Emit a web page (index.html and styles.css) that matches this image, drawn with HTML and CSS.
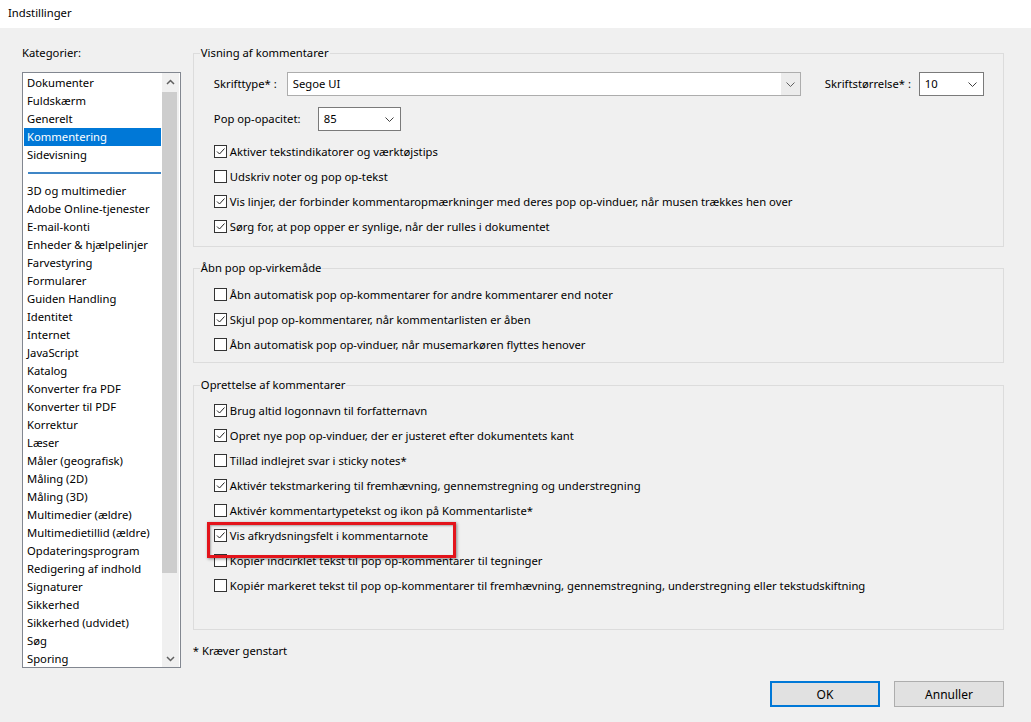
FILE: index.html
```html
<!DOCTYPE html>
<html lang="da">
  <head>
    <meta charset="UTF-8" />
    <title>Indstillinger</title>
    <link rel="stylesheet" href="styles.css">
  </head>
  <body>
    <div class="titlebar">Indstillinger</div>

    <div class="dialog">
      <div class="main-row">
        <div class="left">
          <div class="cat-label">Kategorier:</div>
          <div class="listbox">
            <div class="items">
              <div class="item">Dokumenter</div>
              <div class="item">Fuldskærm</div>
              <div class="item">Generelt</div>
              <div class="item selected">Kommentering</div>
              <div class="item">Sidevisning</div>
              <div class="sep"><span></span></div>
              <div class="item">3D og multimedier</div>
              <div class="item">Adobe Online-tjenester</div>
              <div class="item">E-mail-konti</div>
              <div class="item">Enheder &amp; hjælpelinjer</div>
              <div class="item">Farvestyring</div>
              <div class="item">Formularer</div>
              <div class="item">Guiden Handling</div>
              <div class="item">Identitet</div>
              <div class="item">Internet</div>
              <div class="item">JavaScript</div>
              <div class="item">Katalog</div>
              <div class="item">Konverter fra PDF</div>
              <div class="item">Konverter til PDF</div>
              <div class="item">Korrektur</div>
              <div class="item">Læser</div>
              <div class="item">Måler (geografisk)</div>
              <div class="item">Måling (2D)</div>
              <div class="item">Måling (3D)</div>
              <div class="item">Multimedier (ældre)</div>
              <div class="item">Multimedietillid (ældre)</div>
              <div class="item">Opdateringsprogram</div>
              <div class="item">Redigering af indhold</div>
              <div class="item">Signaturer</div>
              <div class="item">Sikkerhed</div>
              <div class="item">Sikkerhed (udvidet)</div>
              <div class="item">Søg</div>
              <div class="item">Sporing</div>
            </div>
            <div class="scrollbar">
              <div class="sb-arrow">
                <svg width="9" height="6" viewBox="0 0 9 6"><path d="M1 5 L4.5 1.5 L8 5" fill="none" stroke="#606060" stroke-width="1.5"/></svg>
              </div>
              <div class="sb-thumb"></div>
              <div class="sb-track"></div>
              <div class="sb-arrow">
                <svg width="9" height="6" viewBox="0 0 9 6"><path d="M1 1 L4.5 4.5 L8 1" fill="none" stroke="#606060" stroke-width="1.5"/></svg>
              </div>
            </div>
          </div>
        </div>

        <div class="right">
          <fieldset class="group g1">
            <legend>Visning af kommentarer</legend>
            <div class="field-row">
              <span class="label l-font">Skrifttype* :</span>
              <div class="combo combo-font">
                <span class="combo-text">Segoe UI</span>
                <span class="combo-btn">
                  <svg width="9" height="5" viewBox="0 0 9 5"><path d="M0.5 0.5 L4.5 4.5 L8.5 0.5" fill="none" stroke="#606060"/></svg>
                </span>
              </div>
              <span class="label l-size">Skriftstørrelse* :</span>
              <div class="select select-size">
                <span>10</span>
                <svg width="9" height="5" viewBox="0 0 9 5"><path d="M0.5 0.5 L4.5 4.5 L8.5 0.5" fill="none" stroke="#404040"/></svg>
              </div>
            </div>
            <div class="field-row row-opacity">
              <span class="label l-opacity">Pop op-opacitet:</span>
              <div class="select select-opacity">
                <span>85</span>
                <svg width="9" height="5" viewBox="0 0 9 5"><path d="M0.5 0.5 L4.5 4.5 L8.5 0.5" fill="none" stroke="#404040"/></svg>
              </div>
            </div>
            <div class="checks">
              <div class="cb-row"><span class="cb on"><svg width="11" height="11" viewBox="0 0 11 11"><path d="M2 5.5 L4.5 8 L9.5 2.5" fill="none" stroke="#222"/></svg></span>Aktiver tekstindikatorer og værktøjstips</div>
              <div class="cb-row"><span class="cb"></span>Udskriv noter og pop op-tekst</div>
              <div class="cb-row"><span class="cb on"><svg width="11" height="11" viewBox="0 0 11 11"><path d="M2 5.5 L4.5 8 L9.5 2.5" fill="none" stroke="#222"/></svg></span>Vis linjer, der forbinder kommentaropmærkninger med deres pop op-vinduer, når musen trækkes hen over</div>
              <div class="cb-row"><span class="cb on"><svg width="11" height="11" viewBox="0 0 11 11"><path d="M2 5.5 L4.5 8 L9.5 2.5" fill="none" stroke="#222"/></svg></span>Sørg for, at pop opper er synlige, når der rulles i dokumentet</div>
            </div>
          </fieldset>

          <fieldset class="group g2">
            <legend>Åbn pop op-virkemåde</legend>
            <div class="checks">
              <div class="cb-row"><span class="cb"></span>Åbn automatisk pop op-kommentarer for andre kommentarer end noter</div>
              <div class="cb-row"><span class="cb on"><svg width="11" height="11" viewBox="0 0 11 11"><path d="M2 5.5 L4.5 8 L9.5 2.5" fill="none" stroke="#222"/></svg></span>Skjul pop op-kommentarer, når kommentarlisten er åben</div>
              <div class="cb-row"><span class="cb"></span>Åbn automatisk pop op-vinduer, når musemarkøren flyttes henover</div>
            </div>
          </fieldset>

          <fieldset class="group g3">
            <legend>Oprettelse af kommentarer</legend>
            <div class="checks">
              <div class="cb-row"><span class="cb on"><svg width="11" height="11" viewBox="0 0 11 11"><path d="M2 5.5 L4.5 8 L9.5 2.5" fill="none" stroke="#222"/></svg></span>Brug altid logonnavn til forfatternavn</div>
              <div class="cb-row"><span class="cb on"><svg width="11" height="11" viewBox="0 0 11 11"><path d="M2 5.5 L4.5 8 L9.5 2.5" fill="none" stroke="#222"/></svg></span>Opret nye pop op-vinduer, der er justeret efter dokumentets kant</div>
              <div class="cb-row"><span class="cb"></span>Tillad indlejret svar i sticky notes*</div>
              <div class="cb-row"><span class="cb on"><svg width="11" height="11" viewBox="0 0 11 11"><path d="M2 5.5 L4.5 8 L9.5 2.5" fill="none" stroke="#222"/></svg></span>Aktivér tekstmarkering til fremhævning, gennemstregning og understregning</div>
              <div class="cb-row"><span class="cb"></span>Aktivér kommentartypetekst og ikon på Kommentarliste*</div>
              <div class="cb-row highlight"><span class="cb on"><svg width="11" height="11" viewBox="0 0 11 11"><path d="M2 5.5 L4.5 8 L9.5 2.5" fill="none" stroke="#222"/></svg></span>Vis afkrydsningsfelt i kommentarnote</div>
              <div class="cb-row"><span class="cb"></span>Kopier indcirklet tekst til pop op-kommentarer til tegninger</div>
              <div class="cb-row"><span class="cb"></span>Kopiér markeret tekst til pop op-kommentarer til fremhævning, gennemstregning, understregning eller tekstudskiftning</div>
            </div>
          </fieldset>

          <div class="footnote">* Kræver genstart</div>
        </div>
      </div>

      <div class="buttons">
        <button class="btn btn-default">OK</button>
        <button class="btn">Annuller</button>
      </div>
    </div>
  </body>
</html>
```

FILE: styles.css
```css
* {
  box-sizing: border-box;
  margin: 0;
  padding: 0;
}
body {
  font-family: "Noto Sans", "Liberation Sans", sans-serif;
  font-size: 11.25px;
  line-height: 18px;
  color: #000;
  background: #f0f0f0;
  width: 1031px;
  height: 722px;
  overflow: hidden;
}
.titlebar {
  height: 28px;
  line-height: 26px;
  padding-left: 8px;
  background: #fff;
}
.dialog {
  padding: 16px 27px 0 22px;
}
.main-row {
  display: flex;
}
.left {
  width: 159px;
}
.cat-label {
  height: 18px;
  margin-bottom: 10px;
}
.listbox {
  display: flex;
  height: 596px;
  background: #fff;
  border: 1px solid #828790;
  overflow: hidden;
}
.items {
  width: 139px;
  padding: 1px;
}
.item {
  height: 18px;
  padding-left: 3px;
  white-space: nowrap;
}
.item.selected {
  background: #0078d7;
  color: #fff;
}
.sep {
  height: 18px;
  padding: 0 0 0 4px;
  display: flex;
  align-items: center;
}
.sep span {
  display: block;
  width: 133px;
  height: 2px;
  background: #3f86c6;
}
.scrollbar {
  width: 17px;
  display: flex;
  flex-direction: column;
  background: #f0f0f0;
}
.sb-arrow {
  height: 17px;
  display: flex;
  align-items: center;
  justify-content: center;
}
.sb-thumb {
  height: 481px;
  margin: 2px 2px 0 0;
  background: #cdcdcd;
}
.sb-track {
  flex: 1;
}
.right {
  width: 812px;
  margin-left: 12px;
}
.group {
  border: 1px solid #dcdcdc;
  padding: 0 0 0 20px;
  min-width: 0;
}
.group legend {
  margin-left: -14px;
  padding: 0 1px;
  line-height: 18px;
}
.g1 {
  padding-top: 10px;
  padding-bottom: 7px;
}
.g2 {
  margin-top: 12px;
  padding-top: 5px;
  padding-bottom: 5px;
}
.g3 {
  margin-top: 13px;
  padding-top: 4px;
  padding-bottom: 31px;
}
.field-row {
  display: flex;
  align-items: center;
  height: 24px;
}
.row-opacity {
  margin-top: 11px;
}
.label {
  white-space: nowrap;
}
.l-font {
  width: 73px;
}
.l-size {
  width: 94px;
  margin-left: 24px;
}
.l-opacity {
  width: 104px;
}
.combo {
  display: flex;
  width: 514px;
  height: 24px;
  border: 1px solid #adadad;
  background: #fff;
}
.combo-text {
  flex: 1;
  padding-left: 5px;
  line-height: 22px;
}
.combo-btn {
  width: 19px;
  background: #ececec;
  display: flex;
  align-items: center;
  justify-content: center;
}
.select {
  display: flex;
  align-items: center;
  justify-content: space-between;
  height: 24px;
  padding: 0 6px 0 5px;
  border: 1px solid #7a7a7a;
  background: #fff;
}
.select-size {
  width: 65px;
}
.select-opacity {
  width: 83px;
}
.g1 .checks {
  margin-top: 8px;
}
.cb-row {
  display: flex;
  align-items: center;
  height: 25px;
  white-space: nowrap;
}
.cb {
  display: flex;
  align-items: center;
  justify-content: center;
  width: 13px;
  height: 13px;
  margin-right: 3px;
  border: 1px solid #333;
  background: #fff;
}
.highlight {
  position: relative;
}
.highlight::after {
  content: "";
  position: absolute;
  left: -7px;
  top: -1px;
  width: 243px;
  height: 30px;
  border: 3px solid #e3141b;
  box-shadow: 1px 1px 3px rgba(0, 0, 0, 0.45), inset 1px 1px 2px rgba(0, 0, 0, 0.3);
}
.footnote {
  margin-top: 12px;
  height: 18px;
}
.buttons {
  display: flex;
  justify-content: flex-end;
  gap: 14px;
  margin-top: 13px;
}
.btn {
  width: 110px;
  height: 26px;
  font-family: inherit;
  font-size: 12px;
  color: #000;
  background: #e1e1e1;
  border: 1px solid #adadad;
}
.btn-default {
  border: 2px solid #0078d7;
}
```
